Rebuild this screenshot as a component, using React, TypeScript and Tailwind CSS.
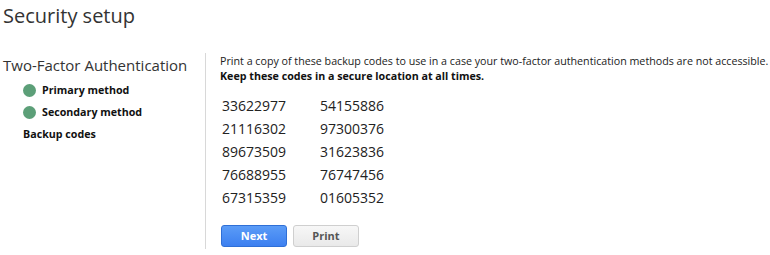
export default function App() {
  const codes = [
    ["33622977", "54155886"],
    ["21116302", "97300376"],
    ["89673509", "31623836"],
    ["76688955", "76747456"],
    ["67315359", "01605352"],
  ];

  return (
    <div className="w-[770px] h-[255px] bg-white text-[#222] font-['Open_Sans',sans-serif] overflow-hidden">
      {/* Page title */}
      <h1 className="pl-[3px] pt-[2px] text-[20px] leading-[28px] text-[#333]">Security setup</h1>

      <div className="flex mt-[23px]">
        {/* Left nav */}
        <div className="w-[206px] shrink-0 pl-[3px] pt-[1px] border-r border-[#d8d8d8] h-[196px]">
          <div className="text-[15px] leading-[22px] text-[#333]">Two-Factor Authentication</div>
          <ul className="pl-[20px] mt-[3px] text-[10.7px] font-bold leading-[22px] text-[#111]">
            <li className="flex items-center gap-[6px]">
              <span className="w-[13px] h-[13px] rounded-full bg-[#5c9f78]" />
              Primary method
            </li>
            <li className="flex items-center gap-[6px]">
              <span className="w-[13px] h-[13px] rounded-full bg-[#5c9f78]" />
              Secondary method
            </li>
            <li>Backup codes</li>
          </ul>
        </div>

        {/* Content */}
        <div className="pl-[14px] pt-[1px]">
          <p className="text-[10.7px] leading-[15px] text-[#222] whitespace-nowrap">
            Print a copy of these backup codes to use in a case your two-factor authentication methods are not accessible.
          </p>
          <p className="text-[10.7px] leading-[15px] font-bold text-[#111] whitespace-nowrap">
            Keep these codes in a secure location at all times.
          </p>

          <div className="mt-[10px] pl-[2px] text-[14px] leading-[23px] text-[#222]">
            {codes.map(([a, b]) => (
              <div key={a} className="flex">
                <span className="w-[98px]">{a}</span>
                <span>{b}</span>
              </div>
            ))}
          </div>

          <div className="flex gap-[6px] mt-[16px] pl-[1px]">
            <button className="w-[66px] h-[22px] rounded-[3px] border border-[#2f6fd6] bg-gradient-to-b from-[#5b9cf7] to-[#3c7ff0] text-white text-[11px] font-bold">
              Next
            </button>
            <button className="w-[66px] h-[22px] rounded-[3px] border border-[#cfcfcf] bg-gradient-to-b from-[#f7f7f7] to-[#e9e9e9] text-[#555] text-[11px] font-bold">
              Print
            </button>
          </div>
        </div>
      </div>
    </div>
  );
}
